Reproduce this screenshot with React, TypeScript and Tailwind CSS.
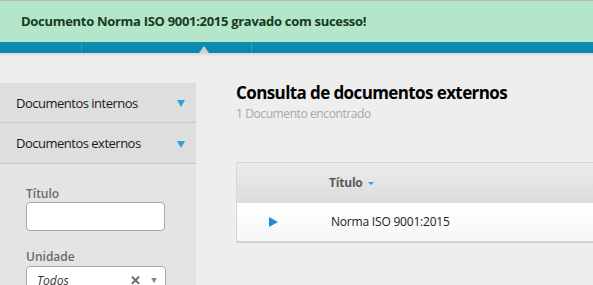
import React from "react";

export default function App() {
  return (
    <div className="w-[593px] h-[285px] overflow-hidden bg-[#eeeeee] relative" style={{ fontFamily: '"Open Sans", "Noto Sans", sans-serif' }}>
      <div className="h-[1px] bg-[#b9b9b9]" />
      <div className="h-[41px] bg-[#b4e6c9] flex items-center pl-[21px]">
        <span className="text-[13px] font-bold text-[#173a22] tracking-[-0.3px]">Documento Norma ISO 9001:2015 gravado com sucesso!</span>
      </div>
      <div className="h-[11px] bg-gradient-to-b from-[#0e8db3] to-[#0a86ab] relative">
        <div className="absolute left-[81px] top-0 h-full w-px bg-[#2c9cbd]" />
        <div className="absolute left-[251px] top-0 h-full w-px bg-[#2c9cbd]" />
        <div className="absolute left-[199px] bottom-0 w-0 h-0 border-l-[5px] border-r-[5px] border-b-[7px] border-l-transparent border-r-transparent border-b-[#cfcfcf]" />
      </div>
      <div className="h-[4px] bg-gradient-to-b from-[#d9d9d9] to-[#eeeeee]" />
      <div className="flex pt-[26px]">
        <div className="w-[196px] shrink-0">
          <div className="h-[40px] bg-[#dedede] border-b border-[#c9c9c9] flex items-center justify-between pl-[16px] pr-[11px] pt-[2px]">
            <span className="text-[13px] text-[#1a1a1a] tracking-[-0.5px]">Documentos internos</span>
            <span className="w-0 h-0 border-l-[4px] border-r-[4px] border-t-[7px] border-l-transparent border-r-transparent border-t-[#27a4da]" />
          </div>
          <div className="h-[41px] bg-[#dedede] border-b border-[#c9c9c9] flex items-center justify-between pl-[16px] pr-[11px] pt-[2px]">
            <span className="text-[13px] text-[#1a1a1a] tracking-[-0.5px]">Documentos externos</span>
            <span className="w-0 h-0 border-l-[4px] border-r-[4px] border-t-[7px] border-l-transparent border-r-transparent border-t-[#27a4da]" />
          </div>
          <div className="bg-[#e4e4e4] h-[200px] pl-[26px] pt-[22px]">
            <div className="text-[12px] font-semibold text-[#6b6b6b] leading-[16px]">Título</div>
            <div className="w-[139px] h-[29px] bg-white border border-[#a9a9a9] rounded-[4px]" />
            <div className="mt-[18px] text-[12px] font-semibold text-[#6b6b6b] leading-[16px]">Unidade</div>
            <div className="mt-[1px] w-[140px] h-[29px] bg-white border border-[#a9a9a9] rounded-[4px] flex items-center pl-[10px] pr-[8px]">
              <span className="italic text-[12px] text-[#333]">Todos</span>
              <span className="ml-auto text-[13px] font-bold text-[#666] leading-none">✕</span>
              <span className="ml-[10px] w-0 h-0 border-l-[3px] border-r-[3px] border-t-[5px] border-l-transparent border-r-transparent border-t-[#888]" />
            </div>
          </div>
        </div>
        <div className="flex-1 pl-[40px]">
          <div className="text-[17px] font-bold text-black leading-[20px] tracking-[-0.6px]">Consulta de documentos externos</div>
          <div className="mt-[3px] text-[12px] text-[#a8a8a8] leading-[16px] tracking-[-0.4px]">1 Documento encontrado</div>
          <div className="mt-[40px] border-l border-t border-[#d6d6d6] w-[400px]">
            <div className="h-[40px] bg-gradient-to-b from-[#ececec] to-[#dcdcdc] flex items-center pl-[92px]">
              <span className="text-[12px] font-bold text-[#5a5a5a] tracking-[-0.2px]">Título</span>
              <span className="ml-[5px] w-0 h-0 border-l-[3px] border-r-[3px] border-t-[3px] border-l-transparent border-r-transparent border-t-[#27a4da]" />
            </div>
            <div className="h-[40px] bg-gradient-to-b from-white to-[#f6f6f6] border-b-2 border-[#d0d0d0] flex items-center">
              <span className="ml-[32px] w-0 h-0 border-t-[5px] border-b-[5px] border-l-[9px] border-t-transparent border-b-transparent border-l-[#1d8fd0]" />
              <span className="ml-[53px] text-[12px] text-[#222] tracking-[-0.2px]">Norma ISO 9001:2015</span>
            </div>
          </div>
        </div>
      </div>
    </div>
  );
}
